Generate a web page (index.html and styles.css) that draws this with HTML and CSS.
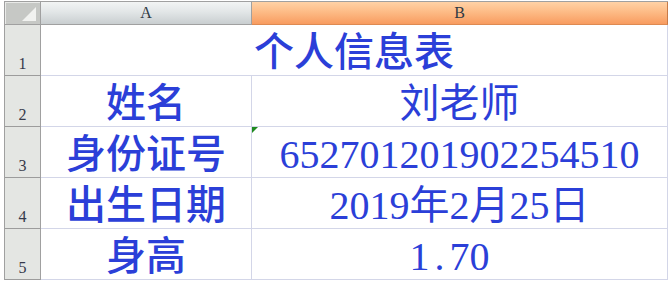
FILE: index.html
```html
<!DOCTYPE html>
<html lang="zh-CN">
<head>
    <meta charset="UTF-8">
    <title>个人信息表</title>
    <link rel="stylesheet" href="styles.css">
</head>
<body>
    <div class="sheet">
        <!-- cabecera de columnas -->
        <div class="corner">
            <svg width="16" height="16" viewBox="0 0 16 16"><polygon points="1,15 15,15 15,1" fill="#f1f2f0"/></svg>
        </div>
        <div class="colhead">A</div>
        <div class="colhead active">B</div>

        <div class="rowhead">1</div>
        <div class="cell title">个人信息表</div>

        <div class="rowhead">2</div>
        <div class="cell label">姓名</div>
        <div class="cell value">刘老师</div>

        <div class="rowhead">3</div>
        <div class="cell label">身份证号</div>
        <div class="cell value text-num">652701201902254510</div>

        <div class="rowhead">4</div>
        <div class="cell label">出生日期</div>
        <div class="cell value">2019年2月25日</div>

        <div class="rowhead">5</div>
        <div class="cell label">身高</div>
        <div class="cell value trail">1<span class="dot">.</span>70</div>
    </div>
</body>
</html>
```

FILE: styles.css
```css
body {
    margin: 0;
    background: #fff;
}
.sheet {
    display: grid;
    grid-template-columns: 36px 211px 416px;
    grid-template-rows: 23px repeat(5, 51px);
    margin: 1px 0 0 4px;
    border-top: 1px solid #a0a0a0;
    border-left: 1px solid #a0a0a0;
}
.corner {
    background: #c6c8c5;
    border-right: 1px solid #a0a0a0;
    border-bottom: 1px solid #a0a0a0;
    box-sizing: border-box;
    display: flex;
    justify-content: flex-end;
    align-items: flex-end;
    padding: 0 3px 2px 0;
    box-shadow: inset 1px 1px 0 #e9eae8;
}
.corner svg {
    display: block;
}
.colhead {
    background: linear-gradient(#f2f4f4, #e2e6e7 45%, #c9ced0);
    border-right: 1px solid #a0a0a0;
    border-bottom: 1px solid #a0a0a0;
    box-sizing: border-box;
    font-family: "Liberation Serif", serif;
    font-size: 16px;
    color: #303a44;
    display: flex;
    align-items: center;
    justify-content: center;
}
.colhead.active {
    background: linear-gradient(#ffd2a6, #fdbb86 45%, #f89c60);
    border-right-color: #c77a48;
    border-bottom-color: #de8a52;
}
.rowhead {
    background: #e4e6e3;
    border-right: 1px solid #a0a0a0;
    border-bottom: 1px solid #9c9c9c;
    box-sizing: border-box;
    font-family: "Liberation Serif", serif;
    font-size: 16px;
    line-height: 1;
    color: #35394a;
    display: flex;
    align-items: flex-end;
    justify-content: center;
    padding-bottom: 3px;
}
.cell {
    position: relative;
    border-right: 1px solid #d3d6e8;
    border-bottom: 1px solid #d3d6e8;
    box-sizing: border-box;
    color: #2b3fd8;
    font-size: 40px;
    line-height: 1;
    display: flex;
    align-items: center;
    justify-content: center;
    white-space: nowrap;
}
.title,
.label {
    font-family: "Noto Sans CJK SC", sans-serif;
    font-weight: 500;
    padding-bottom: 2px;
}
.title {
    grid-column: span 2;
}
.value {
    font-family: "Liberation Serif", "Noto Sans CJK SC", serif;
    padding-top: 5px;
}
.trail {
    padding-right: 0.5em;
}
.dot {
    display: inline-block;
    width: 0.5em;
    text-align: center;
}
/* triángulo verde: número guardado como texto */
.text-num::before {
    content: "";
    position: absolute;
    top: 0;
    left: 0;
    border-top: 6px solid #1f8a1f;
    border-right: 6px solid transparent;
}
```
